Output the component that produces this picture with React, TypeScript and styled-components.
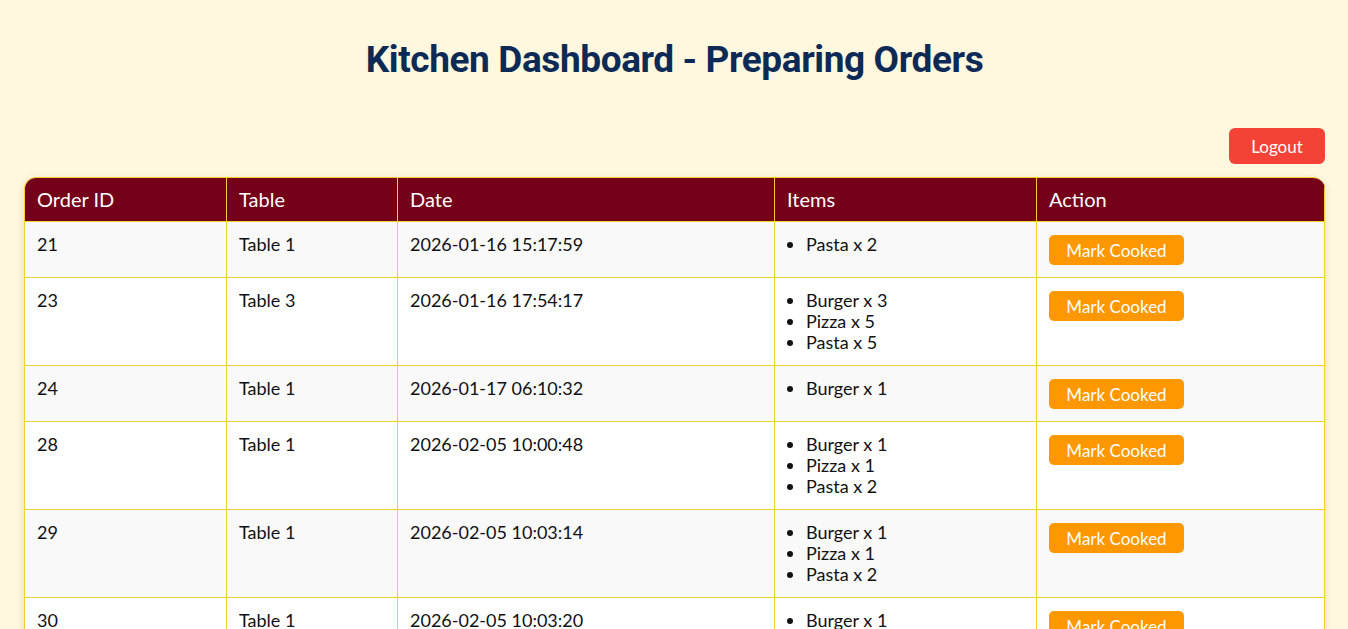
import React from "react";
import styled, { createGlobalStyle } from "styled-components";

const Global = createGlobalStyle`
  html, body { margin: 0; padding: 0; background: #fff7de; }
  body { font-family: "Lato", "Noto Sans", sans-serif; color: #111; }
  * { box-sizing: border-box; }
`;

const Page = styled.div`
  padding: 38px 23px 40px 24px;
`;

const Title = styled.h1`
  margin: 0;
  text-align: center;
  font-family: "Roboto", "Noto Sans", sans-serif;
  font-weight: 700;
  font-size: 37px;
  line-height: 44px;
  letter-spacing: -0.4px;
  color: #0c2a55;
`;

const Toolbar = styled.div`
  display: flex;
  justify-content: flex-end;
  margin-top: 46px;
  margin-bottom: 13px;
`;

const LogoutButton = styled.button`
  background: #f44336;
  color: #fff;
  border: none;
  border-radius: 6px;
  width: 96px;
  height: 36px;
  font-family: "Lato", "Noto Sans", sans-serif;
  font-size: 17px;
  cursor: pointer;
`;

const Table = styled.table`
  width: 100%;
  border-collapse: separate;
  border-spacing: 0;
  border-radius: 12px 12px 0 0;
  overflow: hidden;
  box-shadow: 0 2px 8px rgba(0, 0, 0, 0.12);
  border-top: 1px solid #f5cf2a;
  border-left: 1px solid #f5cf2a;
  table-layout: fixed;
`;

const Th = styled.th<{ $w: number }>`
  width: ${(p) => p.$w}px;
  background: #740019;
  color: #fff;
  text-align: left;
  font-weight: 400;
  font-size: 20px;
  line-height: 19px;
  padding: 12px;
  border-right: 1px solid #f5cf2a;
  border-bottom: 1px solid #f5cf2a;
`;

const Tr = styled.tr<{ $odd: boolean }>`
  background: ${(p) => (p.$odd ? "#f9f9f9" : "#ffffff")};
`;

const Td = styled.td`
  vertical-align: top;
  padding: 12px;
  font-size: 18px;
  line-height: 21px;
  border-right: 1px solid #f5cf2a;
  border-bottom: 1px solid #f5cf2a;
`;

const ItemList = styled.ul`
  margin: 0;
  padding-left: 19px;
`;

const CookButton = styled.button`
  display: block;
  background: #ff9800;
  color: #fff;
  border: none;
  border-radius: 5px;
  height: 30px;
  width: 135px;
  padding: 0;
  font-family: "Lato", "Noto Sans", sans-serif;
  font-size: 17px;
  cursor: pointer;
  margin-top: 1px;
`;

type Order = { id: number; table: string; date: string; items: string[] };

const orders: Order[] = [
  { id: 21, table: "Table 1", date: "2026-01-16 15:17:59", items: ["Pasta x 2"] },
  { id: 23, table: "Table 3", date: "2026-01-16 17:54:17", items: ["Burger x 3", "Pizza x 5", "Pasta x 5"] },
  { id: 24, table: "Table 1", date: "2026-01-17 06:10:32", items: ["Burger x 1"] },
  { id: 28, table: "Table 1", date: "2026-02-05 10:00:48", items: ["Burger x 1", "Pizza x 1", "Pasta x 2"] },
  { id: 29, table: "Table 1", date: "2026-02-05 10:03:14", items: ["Burger x 1", "Pizza x 1", "Pasta x 2"] },
  { id: 30, table: "Table 1", date: "2026-02-05 10:03:20", items: ["Burger x 1", "Pizza x 1", "Pasta x 2"] },
];

const cols: [string, number][] = [
  ["Order ID", 202],
  ["Table", 171],
  ["Date", 377],
  ["Items", 262],
  ["Action", 288],
];

export default function App() {
  return (
    <>
      <Global />
      <Page>
        <Title>Kitchen Dashboard - Preparing Orders</Title>
        <Toolbar>
          <LogoutButton>Logout</LogoutButton>
        </Toolbar>
        <Table>
          <thead>
            <tr>
              {cols.map(([c, w]) => (
                <Th key={c} $w={w}>
                  {c}
                </Th>
              ))}
            </tr>
          </thead>
          <tbody>
            {orders.map((o, i) => (
              <Tr key={o.id} $odd={i % 2 === 0}>
                <Td>{o.id}</Td>
                <Td>{o.table}</Td>
                <Td>{o.date}</Td>
                <Td>
                  <ItemList>
                    {o.items.map((it) => (
                      <li key={it}>{it}</li>
                    ))}
                  </ItemList>
                </Td>
                <Td>
                  <CookButton>Mark Cooked</CookButton>
                </Td>
              </Tr>
            ))}
          </tbody>
        </Table>
      </Page>
    </>
  );
}
